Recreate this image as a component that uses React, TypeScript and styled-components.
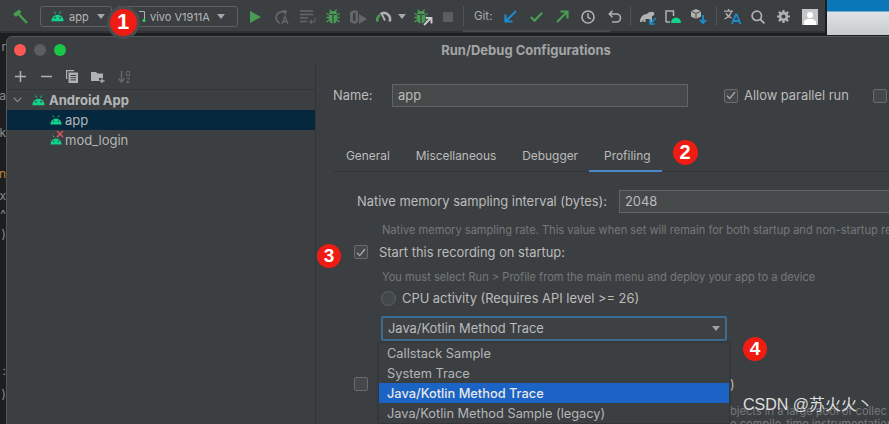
import React from "react";
import styled, { createGlobalStyle } from "styled-components";

const Global = createGlobalStyle`
  html, body { margin: 0; padding: 0; background: #1e1e1e; }
  * { box-sizing: border-box; }
`;

const Root = styled.div`
  position: relative;
  width: 889px;
  height: 424px;
  overflow: hidden;
  background: #1d1e1f;
  font-family: Inter, "Noto Sans", "Noto Sans CJK SC", sans-serif;
  font-size: 13px;
  color: #bbbbbb;
`;

const TopRow = styled.div`
  display: flex;
  height: 35px;
`;

const Toolbar = styled.div`
  position: relative;
  width: 825px;
  height: 33px;
  background: #3c3f41;
  display: flex;
  align-items: flex-start;
  padding: 6px 0 0 12px;
  border-bottom: 2px solid #2f3234;
`;

const ScrollThumb = styled.div`
  position: absolute;
  left: 463px;
  bottom: -1px;
  width: 147px;
  height: 2px;
  background: #494c4e;
`;

const WindowPeek = styled.div`
  flex: 1;
  margin-left: 2px;
  height: 35px;
  background: linear-gradient(#0a78b8 0 11px, #dfe2e4 12px, #c9cccf 100%);
`;

const Slot = styled.div<{ $w: number; $ml?: number }>`
  flex: none;
  width: ${(p) => p.$w}px;
  margin-left: ${(p) => p.$ml ?? 0}px;
  height: 21px;
  display: flex;
  align-items: center;
  justify-content: center;
`;

const Combo = styled.div<{ $w: number; $ml: number; $pl: number }>`
  flex: none;
  width: ${(p) => p.$w}px;
  margin-left: ${(p) => p.$ml}px;
  height: 21px;
  padding-left: ${(p) => p.$pl}px;
  display: flex;
  align-items: center;
  border: 1px solid #5e6163;
  border-radius: 3px;
  font-size: 11px;
  color: #b4b6b8;
`;

const ComboLabel = styled.span<{ $ml: number }>`
  margin-left: ${(p) => p.$ml}px;
  white-space: nowrap;
`;

const Caret = styled.span<{ $ml?: number; $c?: string }>`
  flex: none;
  margin-left: ${(p) => p.$ml ?? 0}px;
  width: 0;
  height: 0;
  border-left: 4.5px solid transparent;
  border-right: 4.5px solid transparent;
  border-top: 5px solid ${(p) => p.$c ?? "#a5a7a9"};
`;

const ToolSep = styled.div<{ $ml?: number }>`
  flex: none;
  width: 1px;
  height: 20px;
  margin-left: ${(p) => p.$ml ?? 0}px;
  background: #505355;
`;

const GitLabel = styled.span`
  flex: none;
  width: 23px;
  margin-left: 10px;
  line-height: 21px;
  font-size: 11.5px;
  color: #a9abad;
`;

const Avatar = styled.div`
  flex: none;
  margin: 3px 0 0 5px;
  width: 16px;
  height: 16px;
  background: #c4c6c8;
  display: flex;
  align-items: flex-end;
  justify-content: center;
`;

const Glyph = styled.svg`
  display: block;
  flex: none;
  overflow: visible;
`;

const LeftStrip = styled.div`
  position: absolute;
  left: 0;
  top: 36px;
  width: 6px;
  display: flex;
  flex-direction: column;
  align-items: flex-end;
  overflow: hidden;
`;

const Crumb = styled.span<{ $mt: number; $c?: string }>`
  margin-top: ${(p) => p.$mt}px;
  font-size: 12px;
  line-height: 14px;
  height: 14px;
  color: ${(p) => p.$c ?? "#8b8d8f"};
`;

const Dialog = styled.section`
  position: absolute;
  left: 6px;
  top: 36px;
  width: 1040px;
  height: 400px;
  background: #3c3f41;
  border: 1px solid #55585a;
  border-radius: 6px 0 0 0;
  display: flex;
  flex-direction: column;
`;

const TitleBar = styled.header`
  position: relative;
  flex: none;
  height: 25px;
  display: flex;
  align-items: center;
  justify-content: center;
  font-weight: 700;
  font-size: 13px;
  color: #a3a5a7;
`;

const Lights = styled.div`
  position: absolute;
  left: 7px;
  top: 7px;
  display: flex;
  gap: 8px;
`;

const Light = styled.span<{ $c: string }>`
  width: 12px;
  height: 12px;
  border-radius: 50%;
  background: ${(p) => p.$c};
`;

const Body = styled.div`
  flex: 1;
  display: flex;
  min-height: 0;
`;

const Sidebar = styled.aside`
  flex: none;
  width: 309px;
  border-right: 1px solid #323537;
`;

const SideTools = styled.div`
  height: 28px;
  padding-top: 2px;
  display: flex;
  align-items: center;
  border-bottom: 1px solid #323537;
`;

const SideTool = styled.div`
  flex: none;
  width: 26px;
  display: flex;
  justify-content: center;
`;

const TreeRow = styled.div<{ $selected?: boolean; $indent: number }>`
  height: 20px;
  padding-left: ${(p) => p.$indent}px;
  display: flex;
  align-items: center;
  background: ${(p) => (p.$selected ? "#05283e" : "transparent")};
`;

const ChevronGap = styled.span`
  flex: none;
  width: 10px;
`;

const TreeLabel = styled.span<{ $bold?: boolean; $ml: number }>`
  margin-left: ${(p) => p.$ml}px;
  font-weight: ${(p) => (p.$bold ? 700 : 400)};
  font-size: 13px;
  color: #b4b6b8;
`;

const IconStack = styled.span`
  position: relative;
  display: flex;
`;

const ErrorMark = styled.svg`
  position: absolute;
  right: -2px;
  top: -5px;
`;

const Overlay = styled.svg<{ $r: number; $b: number }>`
  position: absolute;
  right: ${(p) => p.$r}px;
  bottom: ${(p) => p.$b}px;
  overflow: visible;
`;

const Main = styled.main`
  flex: 1;
  min-width: 0;
  padding: 22px 0 0 17px;
  font-size: 12.9px;
`;

const NameRow = styled.div`
  display: flex;
  align-items: center;
  height: 23px;
`;

const NameLabel = styled.label`
  width: 59px;
  flex: none;
`;

const TextField = styled.div<{ $w: number }>`
  flex: none;
  width: ${(p) => p.$w}px;
  height: 23px;
  padding-left: 5px;
  display: flex;
  align-items: center;
  background: #45494a;
  border: 1px solid #646464;
  color: #bbbbbb;
`;

const Check = styled.span<{ $ml?: number }>`
  flex: none;
  width: 14px;
  height: 14px;
  margin-left: ${(p) => p.$ml ?? 0}px;
  border: 1px solid #6b6b6b;
  border-radius: 2px;
  background: #43494a;
  display: flex;
  align-items: center;
  justify-content: center;
`;

const CheckText = styled.span<{ $ml: number }>`
  margin-left: ${(p) => p.$ml}px;
  white-space: nowrap;
`;

const Tabs = styled.nav`
  margin-top: 38px;
  height: 27px;
  display: flex;
  border-bottom: 1px solid #323537;
`;

const Tab = styled.div<{ $active?: boolean }>`
  flex: none;
  height: 27px;
  padding: 0 ${(p) => (p.$active ? 12 : 13)}px 5px ${(p) => (p.$active ? 15 : 13)}px;
  margin-left: ${(p) => (p.$active ? -2 : 0)}px;
  display: flex;
  align-items: center;
  font-size: 11.9px;
  border-bottom: 2px solid ${(p) => (p.$active ? "#4a88c7" : "transparent")};
`;

const Form = styled.div`
  padding-left: 24px;
`;

const NativeRow = styled.div`
  margin-top: 18px;
  display: flex;
  align-items: center;
  height: 23px;
`;

const NativeLabel = styled.label`
  flex: none;
  width: 262px;
  white-space: nowrap;
`;

const Help = styled.p<{ $mt: number; $ml?: number }>`
  margin: ${(p) => p.$mt}px 0 0 ${(p) => p.$ml ?? 25}px;
  height: 16px;
  line-height: 18px;
  font-size: 11.1px;
  color: #75787a;
  white-space: nowrap;
`;

const OptionRow = styled.div<{ $mt: number; $ml?: number }>`
  margin: ${(p) => p.$mt}px 0 0 ${(p) => p.$ml ?? -3}px;
  height: 16px;
  display: flex;
  align-items: center;
`;

const Radio = styled.span`
  flex: none;
  width: 15px;
  height: 15px;
  border-radius: 50%;
  border: 1px solid #5f6264;
  background: #43494a;
`;

const SelectBox = styled.div`
  margin: 10px 0 0 24px;
  width: 346px;
  height: 25px;
  padding: 0 5px 0 5px;
  display: flex;
  align-items: center;
  justify-content: space-between;
  border: 2px solid #3c6c92;
  border-radius: 2px;
  background: #3d4143;
  color: #b9bbbd;
`;

const Popup = styled.ul`
  position: absolute;
  left: 379px;
  top: 343px;
  width: 350px;
  margin: 0;
  padding: 0;
  list-style: none;
  background: #3c3f41;
  box-shadow: 0 0 3px #26282a;
  font-size: 12.8px;
`;

const PopupItem = styled.li<{ $selected?: boolean }>`
  height: 20px;
  line-height: 22px;
  padding-left: 8px;
  background: ${(p) => (p.$selected ? "#1b63c4" : "transparent")};
  color: ${(p) => (p.$selected ? "#e8e8e8" : "#b4b6b8")};
  font-weight: ${(p) => (p.$selected ? 500 : 400)};
`;

const Badge = styled.span<{ $x: number; $y: number; $d: number; $halo?: boolean }>`
  position: absolute;
  left: ${(p) => p.$x - p.$d / 2}px;
  top: ${(p) => p.$y - p.$d / 2}px;
  width: ${(p) => p.$d}px;
  height: ${(p) => p.$d}px;
  border-radius: 50%;
  background: #ee1c12;
  color: #ffffff;
  font-family: "Liberation Sans", sans-serif;
  font-weight: 700;
  font-size: ${(p) => Math.round(p.$d * 0.8)}px;
  display: flex;
  align-items: center;
  justify-content: center;
  box-shadow: ${(p) => (p.$halo ? "0 0 0 3px #4a4c4e" : "none")};
`;

const Watermark = styled.span`
  position: absolute;
  left: 743px;
  top: 395px;
  font-family: "Liberation Sans", "Noto Sans CJK SC", sans-serif;
  font-size: 16px;
  line-height: 19px;
  color: #dcdddd;
  white-space: nowrap;
`;

const GREEN = "#499c54";
const BLUE = "#1b8ccb";
const GRAY = "#afb1b3";
const DIM = "#646769";
const DROID = "#12d18b";

const Droid = ({ w = 14 }: { w?: number }) => (
  <Glyph width={w} height={(w * 11) / 14} viewBox="0 0 14 11">
    <path d="M3.4 0.4L5 3M10.6 0.4L9 3" stroke={DROID} strokeWidth="1" />
    <path d="M0.5 11a6.5 7 0 0 1 13 0z" fill={DROID} />
    <circle cx="4.2" cy="7.2" r="0.9" fill="#3c3f41" />
    <circle cx="9.8" cy="7.2" r="0.9" fill="#3c3f41" />
  </Glyph>
);

const Bug = ({ c = GREEN }: { c?: string }) => (
  <Glyph width="14" height="15" viewBox="0 0 14 15">
    <path d="M3.5 0.5L5 3M10.5 0.5L9 3M0.5 4.5L3 6M13.5 4.5L11 6M0.5 8.5h2.5M13.5 8.5h-2.5M0.5 13L3 11M13.5 13L11 11" stroke={c} strokeWidth="1.4" />
    <path d="M3 5a4 3 0 0 1 8 0z" fill={c} />
    <path d="M3 6h3.4v8.5C4 14.3 3 12 3 10zM7.6 6H11v4c0 2-1 4.3-3.4 4.5z" fill={c} />
  </Glyph>
);

const TopIcons = {
  hammer: (
    <Glyph width="16" height="15" viewBox="0 0 16 15">
      <path d="M1 5L7 0.5L9.5 3L4 8z" fill={GREEN} />
      <path d="M6 4.5L15 14" stroke={GREEN} strokeWidth="2.4" />
    </Glyph>
  ),
  play: (
    <Glyph width="11" height="12" viewBox="0 0 11 12">
      <path d="M0 0L11 6L0 12z" fill={GREEN} />
    </Glyph>
  ),
  rerun: (
    <Glyph width="15" height="14" viewBox="0 0 15 14">
      <path d="M9.5 2.2A5.3 5.3 0 1 0 6 13" fill="none" stroke={DIM} strokeWidth="1.8" />
      <path d="M8 0L13 0.5L11.5 5.5z" fill={DIM} />
      <path d="M8 14L11 6.5L14 14M9.2 11.5h3.6" fill="none" stroke={DIM} strokeWidth="1.3" />
    </Glyph>
  ),
  list: (
    <Glyph width="16" height="13" viewBox="0 0 16 13">
      <path d="M0 1h13M0 4.5h13M0 8h8M0 11.5h7" stroke={DIM} strokeWidth="1.6" />
      <path d="M15 8v2.5a1.5 1.5 0 0 1-1.5 1.5h-3M12 10l-2 2 2 1.5" fill="none" stroke={DIM} strokeWidth="1.1" />
    </Glyph>
  ),
  coverage: (
    <Glyph width="17" height="14" viewBox="0 0 17 14">
      <path d="M0 2L5 0L8 1.5V12L5 14L0 12z" fill={DIM} />
      <path d="M3 3.5L5.5 2.6V11.4L3 10.5z" fill="#3c3f41" />
      <path d="M9 4L17 9L9 14z" fill={DIM} />
    </Glyph>
  ),
  profiler: (
    <Glyph width="15" height="11" viewBox="0 0 15 11">
      <path d="M1.5 10.5A6 6 0 0 1 4 4" fill="none" stroke={GREEN} strokeWidth="2.6" />
      <path d="M4.5 3.2A6 6 0 0 1 13.5 10.5" fill="none" stroke={GRAY} strokeWidth="2.6" />
      <path d="M6 3.5L9 9.5" stroke={GRAY} strokeWidth="1.8" />
    </Glyph>
  ),
  attach: (
    <IconStack>
      <Bug />
      <Overlay $r={-5} $b={-2} width="10" height="9" viewBox="0 0 10 9">
        <path d="M1 8L8 1M3 1h5.5V6.5" fill="none" stroke="#c9cbcd" strokeWidth="1.9" />
      </Overlay>
    </IconStack>
  ),
  stop: (
    <Glyph width="10" height="10" viewBox="0 0 10 10">
      <rect width="10" height="10" fill="#5b5e60" />
    </Glyph>
  ),
  gitIn: (
    <Glyph width="13" height="13" viewBox="0 0 13 13">
      <path d="M12 1L2 11M1.5 4.5V11.5H8.5" fill="none" stroke={BLUE} strokeWidth="2.2" />
    </Glyph>
  ),
  gitCheck: (
    <Glyph width="13" height="10" viewBox="0 0 13 10">
      <path d="M0.8 5L4.5 8.6L12.2 0.8" fill="none" stroke={GREEN} strokeWidth="2.2" />
    </Glyph>
  ),
  gitOut: (
    <Glyph width="13" height="13" viewBox="0 0 13 13">
      <path d="M1 12L11 2M4.5 1.5H11.5V8.5" fill="none" stroke={GREEN} strokeWidth="2.2" />
    </Glyph>
  ),
  clock: (
    <Glyph width="14" height="14" viewBox="0 0 14 14">
      <circle cx="7" cy="7" r="6" fill="none" stroke={GRAY} strokeWidth="1.6" />
      <path d="M7 3.2V7.4L9.8 8.8" fill="none" stroke={GRAY} strokeWidth="1.5" />
    </Glyph>
  ),
  undo: (
    <Glyph width="13" height="13" viewBox="0 0 13 13">
      <path d="M1.5 4h7a3.6 3.6 0 0 1 0 8H4M4.5 0.8L1.3 4l3.2 3.2" fill="none" stroke={GRAY} strokeWidth="1.6" />
    </Glyph>
  ),
  gradle: (
    <IconStack>
      <Glyph width="15" height="11" viewBox="0 0 15 11">
        <path d="M0 11C0 6 3 3 7 3C8.5 1 12 0 14 1.5C15 3 14 5 12 5V11H9.5V8H5.5V11H3.5V8.5L2 11z" fill={GRAY} />
      </Glyph>
      <Overlay $r={-2} $b={-3} width="8" height="8" viewBox="0 0 8 8">
        <path d="M7 1L2 6M1 2.5V7H5.5" fill="none" stroke={BLUE} strokeWidth="1.7" />
      </Overlay>
    </IconStack>
  ),
  deviceSync: (
    <Glyph width="16" height="13" viewBox="0 0 16 13">
      <path d="M1 12V1H8.5V6" fill="none" stroke={GRAY} strokeWidth="1.5" />
      <path d="M1 12H5" stroke={GRAY} strokeWidth="1.5" />
      <path d="M6 13a5 5.5 0 0 1 10 0z" fill={DROID} />
    </Glyph>
  ),
  pkg: (
    <Glyph width="16" height="15" viewBox="0 0 16 15">
      <path d="M5 0L10 2.2V7.5L5 10L0 7.5V2.2z" fill={GRAY} />
      <path d="M5 4.5V10M0.5 2.5L5 4.5L9.5 2.5" fill="none" stroke="#3c3f41" strokeWidth="0.9" />
      <path d="M12 6V14M9 11l3 3 3-3" fill="none" stroke={BLUE} strokeWidth="1.8" />
    </Glyph>
  ),
  translate: (
    <Glyph width="17" height="15" viewBox="0 0 17 15">
      <path d="M0 2.2H9M4.5 0V2.2M7.4 2.2C6.6 6 4 8.5 0.5 10M2 4C3 6.5 5 8 7.5 9" fill="none" stroke={GRAY} strokeWidth="1.3" />
      <path d="M8 15L11.8 5.5H12.6L16.5 15M9.4 12H15" fill="none" stroke={BLUE} strokeWidth="1.8" />
    </Glyph>
  ),
  search: (
    <Glyph width="14" height="14" viewBox="0 0 14 14">
      <circle cx="5.8" cy="5.8" r="4.7" fill="none" stroke={GRAY} strokeWidth="1.7" />
      <path d="M9 9L13.4 13.4" stroke={GRAY} strokeWidth="1.9" />
    </Glyph>
  ),
  gear: (
    <Glyph width="13" height="13" viewBox="0 0 13 13">
      <circle cx="6.5" cy="6.5" r="3.4" fill="none" stroke={GRAY} strokeWidth="2.6" />
      <path d="M6.5 0V2.4M6.5 10.6V13M0 6.5H2.4M10.6 6.5H13M1.9 1.9L3.6 3.6M9.4 9.4L11.1 11.1M11.1 1.9L9.4 3.6M3.6 9.4L1.9 11.1" stroke={GRAY} strokeWidth="2.2" />
    </Glyph>
  ),
  person: (
    <Glyph width="12" height="14" viewBox="0 0 12 14">
      <circle cx="6" cy="4" r="3" fill="#fff" />
      <path d="M0 14V10.5C1 8.5 3.5 8 6 8S11 8.5 12 10.5V14z" fill="#fff" />
    </Glyph>
  ),
};

const SideIcons = {
  plus: (
    <Glyph width="11" height="11" viewBox="0 0 11 11">
      <path d="M5.5 0V11M0 5.5H11" stroke={GRAY} strokeWidth="1.5" />
    </Glyph>
  ),
  minus: (
    <Glyph width="11" height="11" viewBox="0 0 11 11">
      <path d="M0 5.5H11" stroke={GRAY} strokeWidth="1.5" />
    </Glyph>
  ),
  copy: (
    <Glyph width="12" height="13" viewBox="0 0 12 13">
      <path d="M0.6 9V0.6H8" fill="none" stroke={GRAY} strokeWidth="1.2" />
      <path d="M2.5 2.5H12V13H2.5z" fill={GRAY} />
      <path d="M4.5 5.5H10M4.5 7.7H10M4.5 9.9H10" stroke="#3c3f41" strokeWidth="1" />
    </Glyph>
  ),
  folder: (
    <Glyph width="14" height="12" viewBox="0 0 14 12">
      <path d="M0 1H5L6.5 2.5H12V7H8V10H0z" fill={GRAY} />
      <path d="M11 7.5V12M8.5 9.8H13.5" stroke={GRAY} strokeWidth="1.3" />
    </Glyph>
  ),
  sort: (
    <Glyph width="13" height="13" viewBox="0 0 13 13">
      <path d="M3.5 1V11M0.5 8.5L3.5 12L6.5 8.5" fill="none" stroke={DIM} strokeWidth="1.5" />
      <path d="M8.5 1.5h3v4h-3zM8.5 8h3.5L8.5 12.5H12" fill="none" stroke={DIM} strokeWidth="1" />
    </Glyph>
  ),
  chevron: (
    <Glyph width="9" height="6" viewBox="0 0 9 6">
      <path d="M0.7 0.7L4.5 4.7L8.3 0.7" fill="none" stroke="#8c8e90" strokeWidth="1.1" />
    </Glyph>
  ),
};

const Tick = () => (
  <Glyph width="10" height="9" viewBox="0 0 10 9">
    <path d="M1 4.6L3.7 7.6L9 1" fill="none" stroke="#a9abad" strokeWidth="1.3" />
  </Glyph>
);

const App: React.FC = () => (
  <Root>
    <Global />
    <TopRow>
      <Toolbar>
        <ScrollThumb />
        <Slot $w={16}>{TopIcons.hammer}</Slot>
        <Combo $w={72} $ml={12} $pl={10}>
          <Droid w={13} />
          <ComboLabel $ml={5}>app</ComboLabel>
          <Caret $ml={8} />
        </Combo>
        <Combo $w={122} $ml={4} $pl={22}>
          <IconStack>
            <Glyph width="6" height="11" viewBox="0 0 6 11">
              <path d="M0 0.5H5.5V9" fill="none" stroke={GRAY} strokeWidth="1" />
              <circle cx="5" cy="9.5" r="1.6" fill="#1fd655" />
            </Glyph>
          </IconStack>
          <ComboLabel $ml={5}>vivo V1911A</ComboLabel>
          <Caret $ml={7} />
        </Combo>
        <Slot $w={26} $ml={4}>{TopIcons.play}</Slot>
        <Slot $w={26}>{TopIcons.rerun}</Slot>
        <Slot $w={27}>{TopIcons.list}</Slot>
        <Slot $w={24}><Bug /></Slot>
        <Slot $w={26}>{TopIcons.coverage}</Slot>
        <Slot $w={24}>{TopIcons.profiler}</Slot>
        <Slot $w={14}><Caret /></Slot>
        <Slot $w={24}>{TopIcons.attach}</Slot>
        <Slot $w={30}>{TopIcons.stop}</Slot>
        <ToolSep />
        <GitLabel>Git:</GitLabel>
        <Slot $w={26}>{TopIcons.gitIn}</Slot>
        <Slot $w={26}>{TopIcons.gitCheck}</Slot>
        <Slot $w={26}>{TopIcons.gitOut}</Slot>
        <Slot $w={26}>{TopIcons.clock}</Slot>
        <Slot $w={27}>{TopIcons.undo}</Slot>
        <ToolSep $ml={2} />
        <Slot $w={26} $ml={3}>{TopIcons.gradle}</Slot>
        <Slot $w={26}>{TopIcons.deviceSync}</Slot>
        <Slot $w={25}>{TopIcons.pkg}</Slot>
        <ToolSep $ml={5} />
        <Slot $w={30}>{TopIcons.translate}</Slot>
        <Slot $w={22}>{TopIcons.search}</Slot>
        <Slot $w={28}>{TopIcons.gear}</Slot>
        <Avatar>{TopIcons.person}</Avatar>
      </Toolbar>
      <WindowPeek />
    </TopRow>

    <LeftStrip>
      <Crumb $mt={4}>r</Crumb>
      <Crumb $mt={35}>a</Crumb>
      <Crumb $mt={23}>k</Crumb>
      <Crumb $mt={27} $c="#b8862f">n</Crumb>
      <Crumb $mt={8}>x</Crumb>
      <Crumb $mt={4}>^</Crumb>
      <Crumb $mt={6}>)</Crumb>
      <Crumb $mt={123}>:</Crumb>
      <Crumb $mt={9}>)</Crumb>
    </LeftStrip>

    <Dialog>
      <TitleBar>
        <Lights>
          <Light $c="#fc5753" />
          <Light $c="#5b5d5f" />
          <Light $c="#19c648" />
        </Lights>
        Run/Debug Configurations
      </TitleBar>
      <Body>
        <Sidebar>
          <SideTools>
            <SideTool>{SideIcons.plus}</SideTool>
            <SideTool>{SideIcons.minus}</SideTool>
            <SideTool>{SideIcons.copy}</SideTool>
            <SideTool>{SideIcons.folder}</SideTool>
            <SideTool>{SideIcons.sort}</SideTool>
          </SideTools>
          <TreeRow $indent={6}>
            {SideIcons.chevron}
            <ChevronGap />
            <Droid w={13} />
            <TreeLabel $bold $ml={4}>Android App</TreeLabel>
          </TreeRow>
          <TreeRow $selected $indent={43}>
            <Droid w={12} />
            <TreeLabel $ml={3}>app</TreeLabel>
          </TreeRow>
          <TreeRow $indent={43}>
            <IconStack>
              <Droid w={12} />
              <ErrorMark width="8" height="8" viewBox="0 0 8 8">
                <path d="M1 1L7 7M7 1L1 7" stroke="#d9545b" strokeWidth="1.6" />
              </ErrorMark>
            </IconStack>
            <TreeLabel $ml={3}>mod_login</TreeLabel>
          </TreeRow>
        </Sidebar>

        <Main>
          <NameRow>
            <NameLabel>Name:</NameLabel>
            <TextField $w={296}>app</TextField>
            <Check $ml={36}><Tick /></Check>
            <CheckText $ml={6}>Allow parallel run</CheckText>
            <Check $ml={24} />
          </NameRow>

          <Tabs>
            <Tab>General</Tab>
            <Tab>Miscellaneous</Tab>
            <Tab>Debugger</Tab>
            <Tab $active>Profiling</Tab>
          </Tabs>

          <Form>
            <NativeRow>
              <NativeLabel>Native memory sampling interval (bytes):</NativeLabel>
              <TextField $w={400}>2048</TextField>
            </NativeRow>
            <Help $mt={8}>
              Native memory sampling rate. This value when set will remain for both startup and non-startup recordings
            </Help>
            <OptionRow $mt={7}>
              <Check><Tick /></Check>
              <CheckText $ml={11}>Start this recording on startup:</CheckText>
            </OptionRow>
            <Help $mt={8}>You must select Run &gt; Profile from the main menu and deploy your app to a device</Help>
            <OptionRow $mt={6} $ml={24}>
              <Radio />
              <CheckText $ml={6}>CPU activity (Requires API level &gt;= 26)</CheckText>
            </OptionRow>
            <SelectBox>
              Java/Kotlin Method Trace
              <Caret $c="#a0a2a4" />
            </SelectBox>
            <OptionRow $mt={35}>
              <Check />
              <CheckText $ml={362}>)</CheckText>
            </OptionRow>
            <Help $mt={10} $ml={373}>bjects in a large pool of collec</Help>
            <Help $mt={-3} $ml={373}>o compile-time instrumentation</Help>
          </Form>
        </Main>
      </Body>
    </Dialog>

    <Popup>
      <PopupItem>Callstack Sample</PopupItem>
      <PopupItem>System Trace</PopupItem>
      <PopupItem $selected>Java/Kotlin Method Trace</PopupItem>
      <PopupItem>Java/Kotlin Method Sample (legacy)</PopupItem>
    </Popup>

    <Badge $x={123} $y={22} $d={27} $halo>1</Badge>
    <Badge $x={685} $y={152} $d={25}>2</Badge>
    <Badge $x={329} $y={256} $d={24}>3</Badge>
    <Badge $x={755} $y={349} $d={24}>4</Badge>
    <Watermark>CSDN @苏火火丶</Watermark>
  </Root>
);

export default App;
